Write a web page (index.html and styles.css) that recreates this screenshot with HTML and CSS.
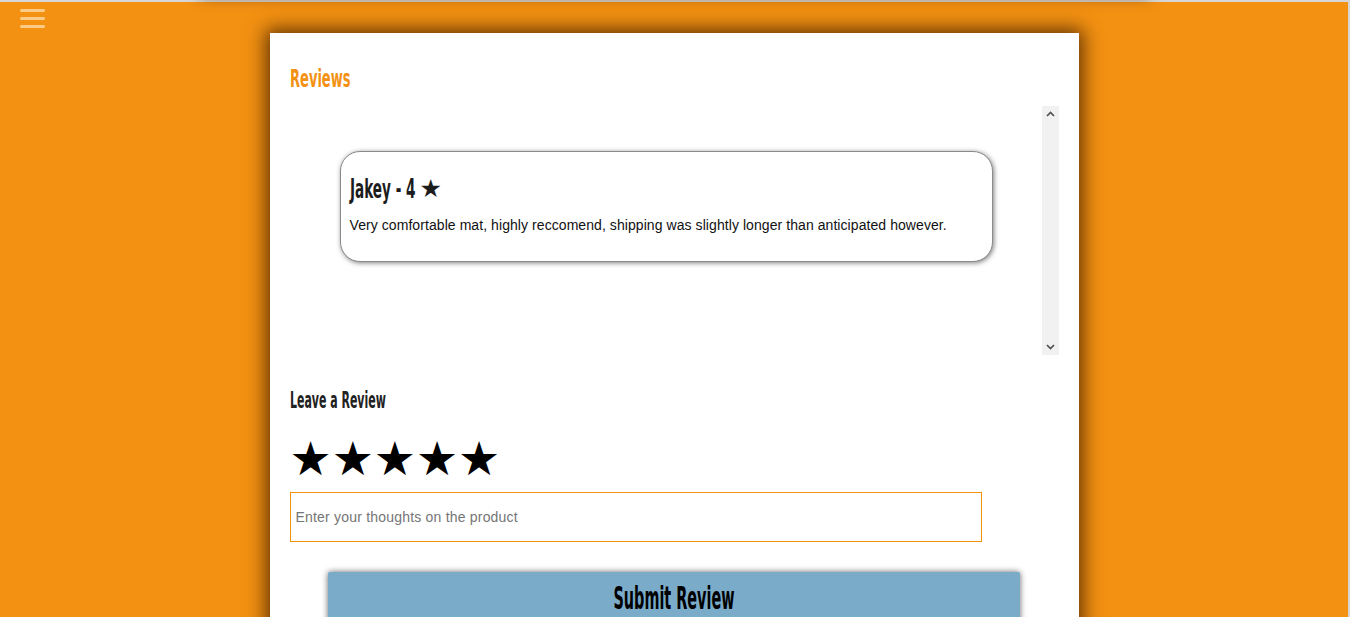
FILE: index.html
```html
<!DOCTYPE html>
<html lang="en">
<head>
<meta charset="utf-8">
<title>Reviews</title>
<link rel="stylesheet" href="styles.css">
</head>
<body>
<div class="top-shadow"></div>
<button class="menu-btn" aria-label="Menu">
  <span></span><span></span><span></span>
</button>
<main class="panel">
  <h2 class="title"><span class="cond">Reviews</span></h2>
  <div class="review-list">
    <div class="review-scroll">
      <div class="review">
        <h3 class="review-name"><span class="cond name-text">Jakey - 4</span><span class="name-star">★</span></h3>
        <p class="review-text">Very comfortable mat, highly reccomend, shipping was slightly longer than anticipated however.</p>
      </div>
    </div>
    <div class="scrollbar" aria-hidden="true">
      <svg class="chev" viewBox="0 0 9 6" width="9" height="6"><path d="M1 5 L4.5 1.5 L8 5" fill="none" stroke="#505050" stroke-width="1.7"/></svg>
      <svg class="chev" viewBox="0 0 9 6" width="9" height="6"><path d="M1 1 L4.5 4.5 L8 1" fill="none" stroke="#505050" stroke-width="1.7"/></svg>
    </div>
  </div>
  <h3 class="leave"><span class="cond">Leave a Review</span></h3>
  <div class="stars">★★★★★</div>
  <input class="thoughts" type="text" placeholder="Enter your thoughts on the product">
  <button class="submit"><span class="cond cond-center">Submit Review</span></button>
</main>
</body>
</html>
```
FILE: styles.css
```css
html {
  height: 100%;
  background: #f39112;
  border-top: 2px solid #d6d6d6;
  border-right: 2px solid #d6d6d6;
  box-sizing: border-box;
}
body {
  margin: 0;
  background: #f39112;
  font-family: "Liberation Sans", Arial, sans-serif;
  overflow: hidden;
  height: 615px;
}
.top-shadow {
  position: absolute;
  left: 200px;
  width: 950px;
  top: -40px;
  height: 38px;
  box-shadow: 0 0 14px rgba(90, 50, 0, 0.55);
  background: #f39112;
}
.menu-btn {
  position: fixed;
  left: 20px;
  top: 9px;
  width: 25px;
  height: 19px;
  padding: 0;
  border: 0;
  background: transparent;
  display: flex;
  flex-direction: column;
  justify-content: space-between;
}
.menu-btn span {
  display: block;
  height: 3px;
  border-radius: 2px;
  background: rgba(255, 228, 185, 0.7);
}
.panel {
  width: 769px;
  margin: 31px auto 0;
  padding: 28px 20px 0;
  background: #fff;
  box-shadow: 0 0 18px 4px rgba(70, 35, 0, 0.85);
  height: 600px;
}
.cond {
  display: inline-block;
  white-space: nowrap;
  font-family: "DejaVu Sans Condensed", "DejaVu Sans", sans-serif;
  font-weight: bold;
  transform-origin: left center;
}
.cond-center {
  transform-origin: center center;
}
.title {
  margin: 0 0 10px;
  font-size: 25px;
  line-height: 34px;
  color: #f39112;
}
.title .cond {
  transform: scaleX(0.58);
}
.review-list {
  height: 249px;
  display: flex;
}
.review-scroll {
  flex: 1;
  padding: 45px 49px 0 50px;
}
.scrollbar {
  width: 17px;
  background: #f1f1f1;
  display: flex;
  flex-direction: column;
  justify-content: space-between;
  align-items: center;
  padding: 5px 0;
  box-sizing: border-box;
}
.chev {
  display: block;
}
.review {
  border: 1px solid #8a8a8a;
  border-radius: 20px;
  box-shadow: 1px 1px 5px rgba(0, 0, 0, 0.5);
  padding: 20px 9px 28px;
  background: #fff;
}
.review-name {
  margin: 0 0 11px;
  font-size: 27px;
  line-height: 34px;
  color: #1c1c1c;
  display: flex;
  align-items: center;
}
.name-text {
  width: 64px;
  transform: scaleX(0.56);
}
.name-star {
  margin-left: 6px;
  font-family: "DejaVu Sans", sans-serif;
  font-size: 25px;
  line-height: 34px;
  color: #1c1c1c;
}
.review-text {
  margin: 0;
  font-size: 14px;
  letter-spacing: 0.07px;
  color: #111;
}
.leave {
  margin: 30px 0 20px;
  font-size: 23px;
  line-height: 30px;
  color: #222;
}
.leave .cond {
  transform: scaleX(0.53);
}
.stars {
  font-family: "DejaVu Sans", sans-serif;
  font-size: 47px;
  line-height: 48px;
  color: #000;
  margin-bottom: 9px;
}
.thoughts {
  display: block;
  width: 90%;
  height: 50px;
  box-sizing: border-box;
  border: 1px solid #f39112;
  padding: 0 5px;
  font-family: "Liberation Sans", Arial, sans-serif;
  font-size: 14px;
  letter-spacing: 0.2px;
  outline: none;
}
.thoughts::placeholder {
  color: #757575;
}
.submit {
  display: block;
  width: 90%;
  margin: 30px auto 0;
  height: 52px;
  background: #7aabc9;
  border: 0;
  border-radius: 2px;
  box-shadow: 0 0 6px rgba(0, 0, 0, 0.6);
  font-size: 32px;
  color: #000;
  overflow: hidden;
}
.submit .cond {
  transform: scaleX(0.5);
}
```
